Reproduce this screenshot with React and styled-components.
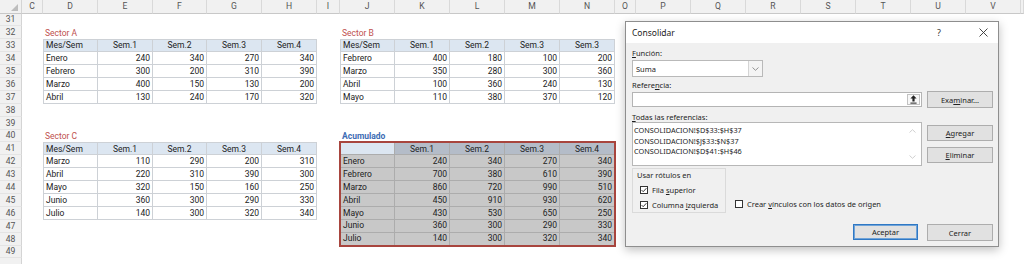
import React from "react";
import styled, { createGlobalStyle } from "styled-components";

// columnas visibles de la hoja (C..V)
const COLS = ["C", "D", "E", "F", "G", "H", "I", "J", "K", "L", "M", "N", "O", "P", "Q", "R", "S", "T", "U", "V", ""];
const ROWS = Array.from({ length: 20 }, (_, i) => 31 + i);

const sectorA = [
    ["Mes/Sem", "Sem.1", "Sem.2", "Sem.3", "Sem.4"],
    ["Enero", 240, 340, 270, 340],
    ["Febrero", 300, 200, 310, 390],
    ["Marzo", 400, 150, 130, 200],
    ["Abril", 130, 240, 170, 320],
];

const sectorB = [
    ["Mes/Sem", "Sem.1", "Sem.2", "Sem.3", "Sem.3"],
    ["Febrero", 400, 180, 100, 200],
    ["Marzo", 350, 280, 300, 360],
    ["Abril", 100, 360, 240, 130],
    ["Mayo", 110, 380, 370, 120],
];

const sectorC = [
    ["Mes/Sem", "Sem.1", "Sem.2", "Sem.3", "Sem.4"],
    ["Marzo", 110, 290, 200, 310],
    ["Abril", 220, 310, 390, 300],
    ["Mayo", 320, 150, 160, 250],
    ["Junio", 360, 300, 290, 330],
    ["Julio", 140, 300, 320, 340],
];

const acumulado = [
    ["", "Sem.1", "Sem.2", "Sem.3", "Sem.4"],
    ["Enero", 240, 340, 270, 340],
    ["Febrero", 700, 380, 610, 390],
    ["Marzo", 860, 720, 990, 510],
    ["Abril", 450, 910, 930, 620],
    ["Mayo", 430, 530, 650, 250],
    ["Junio", 360, 300, 290, 330],
    ["Julio", 140, 300, 320, 340],
];

const referencias = [
    "CONSOLIDACION!$D$33:$H$37",
    "CONSOLIDACION!$J$33:$N$37",
    "CONSOLIDACION!$D$41:$H$46",
];

const GlobalStyle = createGlobalStyle`
    html, body {
        margin: 0;
        padding: 0;
        background: #fff;
    }
    body {
        font-family: Roboto, "Liberation Sans", sans-serif;
    }
`;

const Check = () => (
    <svg width="6" height="6" viewBox="0 0 6 6">
        <polyline points="0.6,3.1 2.2,4.7 5.4,1.2" fill="none" stroke="#222" strokeWidth="0.9" />
    </svg>
);

const Table = ({ col, row, widths, data, acc }) => (
    <TableGrid $col={col} $row={row} $rows={data.length} $widths={widths} $acc={acc}>
        {data.map((r, ri) =>
            r.map((v, ci) => (
                <Cell
                    key={ri + "-" + ci}
                    $head={ri === 0}
                    $align={ri === 0 ? (ci === 0 ? "left" : "center") : ci === 0 ? "left" : "right"}
                    $first={ci === 0}
                    $top={ri === 0}
                    $acc={acc}
                    $corner={acc && ri === 0 && ci === 0}
                >
                    {v}
                </Cell>
            ))
        )}
    </TableGrid>
);

const CheckRow = ({ checked, children }) => (
    <CheckLine>
        <Box>{checked && <Check />}</Box>
        <span>{children}</span>
    </CheckLine>
);

const App = () => {
    return (
        <Screen>
            <GlobalStyle />
            <Sheet>
                <Corner>
                    <svg width="7" height="7" viewBox="0 0 7 7">
                        <polygon points="7,0 7,7 0,7" fill="#bdbdbd" />
                    </svg>
                </Corner>
                {COLS.map((c, i) => (
                    <ColHead key={"c" + i} $col={i + 2}>
                        {c}
                    </ColHead>
                ))}
                {ROWS.map((n) => (
                    <RowHead key={"r" + n} $row={n - 29}>
                        {n < 50 ? n : ""}
                    </RowHead>
                ))}

                <SheetTitle $col={3} $row={3}>Sector A</SheetTitle>
                <Table col={3} row={4} widths="55px 55px 54px 55px 55px" data={sectorA} />

                <SheetTitle $col={9} $row={3}>Sector B</SheetTitle>
                <Table col={9} row={4} widths="repeat(5, 55px)" data={sectorB} />

                <SheetTitle $col={3} $row={11}>Sector C</SheetTitle>
                <Table col={3} row={12} widths="55px 55px 54px 55px 55px" data={sectorC} />

                <SheetTitle $col={9} $row={11} $blue>Acumulado</SheetTitle>
                <Table col={9} row={12} widths="repeat(5, 55px)" data={acumulado} acc />
            </Sheet>

            <Dialog>
                <TitleBar>
                    <span>Consolidar</span>
                    <TitleButton $gap={14}>?</TitleButton>
                    <TitleButton>
                        <svg width="9" height="9" viewBox="0 0 9 9">
                            <path d="M0.5 0.5 L8.5 8.5 M8.5 0.5 L0.5 8.5" stroke="#333" strokeWidth="0.9" />
                        </svg>
                    </TitleButton>
                </TitleBar>
                <Body>
                    <Label $mt={5}>
                        <u>F</u>unción:
                    </Label>
                    <Select>
                        <span>Suma</span>
                        <SelectArrow>
                            <svg width="7" height="4" viewBox="0 0 7 4">
                                <polyline points="0.5,0.5 3.5,3.3 6.5,0.5" fill="none" stroke="#7a7a7a" strokeWidth="0.8" />
                            </svg>
                        </SelectArrow>
                    </Select>
                    <Label $mt={3}>
                        Refere<u>n</u>cia:
                    </Label>
                    <Split $mt={1}>
                        <RefInput>
                            <RefButton>
                                <svg width="7" height="9" viewBox="0 0 7 9">
                                    <path d="M3.5 0.3 L6.6 3.6 H4.6 V6.6 H2.4 V3.6 H0.4 Z" fill="#222" />
                                    <rect x="0.4" y="7.6" width="6.2" height="1" fill="#222" />
                                </svg>
                            </RefButton>
                        </RefInput>
                        <Button>
                            Exa<u>m</u>inar...
                        </Button>
                    </Split>
                    <Label $mt={4}>
                        <u>T</u>odas las referencias:
                    </Label>
                    <Split $mt={0}>
                        <List>
                            {referencias.map((r) => (
                                <ListItem key={r}>{r}</ListItem>
                            ))}
                            <ScrollArrows>
                                <svg width="7" height="4" viewBox="0 0 7 4">
                                    <polyline points="0.5,3.5 3.5,0.7 6.5,3.5" fill="none" stroke="#c4c4c4" strokeWidth="0.8" />
                                </svg>
                                <svg width="7" height="4" viewBox="0 0 7 4">
                                    <polyline points="0.5,0.5 3.5,3.3 6.5,0.5" fill="none" stroke="#c4c4c4" strokeWidth="0.8" />
                                </svg>
                            </ScrollArrows>
                        </List>
                        <ButtonStack>
                            <Button>
                                <u>A</u>gregar
                            </Button>
                            <Button>
                                <u>E</u>liminar
                            </Button>
                        </ButtonStack>
                    </Split>
                    <Options>
                        <Group>
                            <Legend>Usar rótulos en</Legend>
                            <CheckRow checked>
                                Fila <u>s</u>uperior
                            </CheckRow>
                            <CheckRow checked>
                                Columna <u>i</u>zquierda
                            </CheckRow>
                        </Group>
                        <LinkOption>
                            <CheckRow>
                                Crear <u>v</u>ínculos con los datos de origen
                            </CheckRow>
                        </LinkOption>
                    </Options>
                    <Footer>
                        <Button $primary>Aceptar</Button>
                        <Button>Cerrar</Button>
                    </Footer>
                </Body>
            </Dialog>
        </Screen>
    );
};

const Screen = styled.div`
    position: relative;
    width: 1024px;
    height: 264px;
    overflow: hidden;
    background: #fff;
`;

const Sheet = styled.div`
    display: grid;
    grid-template-columns: 22px 21px 55px 55px 54px 55px 55px 23px repeat(5, 55px) 21px repeat(7, 55px) 1fr;
    grid-template-rows: 13.5px repeat(20, 12.9px);
    font-family: Roboto, "Liberation Sans", sans-serif;
    font-size: 8.5px;
    color: #222;
`;

const Corner = styled.div`
    grid-column: 1;
    grid-row: 1;
    background: #f1f1f1;
    border-right: 1px solid #d4d4d4;
    border-bottom: 1px solid #c8c8c8;
    box-sizing: border-box;
    display: flex;
    align-items: flex-end;
    justify-content: flex-end;
    padding: 0 3px 2px 0;
`;

const ColHead = styled.div`
    grid-column: ${(p) => p.$col};
    grid-row: 1;
    box-sizing: border-box;
    background: #f1f1f1;
    border-right: 1px solid #d9d9d9;
    border-bottom: 1px solid #c8c8c8;
    display: flex;
    align-items: center;
    justify-content: center;
    color: #555;
    font-size: 8.6px;
`;

const RowHead = styled.div`
    grid-column: 1;
    grid-row: ${(p) => p.$row};
    box-sizing: border-box;
    background: #f1f1f1;
    border-right: 1px solid #d4d4d4;
    border-bottom: 1px solid #e4e4e4;
    display: flex;
    align-items: center;
    justify-content: center;
    color: #555;
    font-size: 8.6px;
`;

const SheetTitle = styled.div`
    grid-column: ${(p) => p.$col} / span 3;
    grid-row: ${(p) => p.$row};
    display: flex;
    align-items: center;
    padding-left: 2px;
    color: ${(p) => (p.$blue ? "#3d6cb4" : "#c0504d")};
    font-weight: ${(p) => (p.$blue ? 700 : 400)};
`;

const TableGrid = styled.div`
    grid-column: ${(p) => p.$col} / span 5;
    grid-row: ${(p) => p.$row} / span ${(p) => p.$rows};
    display: grid;
    grid-template-columns: ${(p) => p.$widths};
    grid-auto-rows: 12.9px;
    outline: ${(p) => (p.$acc ? "2px solid #a8453e" : "none")};
    outline-offset: -1px;
`;

const cellBg = (p) => {
    if (p.$corner) return "#dce6f1";
    if (p.$acc) return p.$head ? "#b4bcc8" : "#c8c8c8";
    return p.$head ? "#dce6f1" : "#fff";
};

const Cell = styled.div`
    box-sizing: border-box;
    background: ${cellBg};
    border-right: 1px solid ${(p) => (p.$acc ? "#acacac" : "#cdd1d6")};
    border-bottom: 1px solid ${(p) => (p.$acc ? "#acacac" : "#cdd1d6")};
    border-left: ${(p) => (p.$first ? "1px solid #cdd1d6" : "none")};
    border-top: ${(p) => (p.$top ? "1px solid #cdd1d6" : "none")};
    display: flex;
    align-items: center;
    justify-content: ${(p) => (p.$align === "right" ? "flex-end" : p.$align === "center" ? "center" : "flex-start")};
    padding: 0 2px;
    white-space: nowrap;
    line-height: 1;
`;

const Dialog = styled.div`
    position: absolute;
    left: 625px;
    top: 21px;
    width: 374px;
    height: 226px;
    box-sizing: border-box;
    background: #f0f0f0;
    border: 1px solid #8e8e8e;
    box-shadow: 0 3px 9px rgba(0, 0, 0, 0.25);
    font-family: "Noto Sans", "Open Sans", sans-serif;
    font-size: 7.5px;
    color: #1e1e1e;
    display: flex;
    flex-direction: column;
`;

const TitleBar = styled.div`
    height: 21px;
    flex: none;
    background: #fff;
    display: flex;
    align-items: center;
    padding-left: 6px;
    font-size: 8.5px;
    color: #222;

    & > span {
        flex: 1;
    }
`;

const TitleButton = styled.div`
    width: 30px;
    height: 21px;
    margin-right: ${(p) => p.$gap || 0}px;
    display: flex;
    align-items: center;
    justify-content: center;
    font-size: 9px;
    color: #333;
`;

const Body = styled.div`
    display: flex;
    flex-direction: column;
    padding: 0 5px 0 6px;
`;

const Label = styled.div`
    height: 10px;
    line-height: 10px;
    margin-top: ${(p) => p.$mt}px;
`;

const Select = styled.div`
    margin-top: 2px;
    width: 131px;
    height: 17px;
    box-sizing: border-box;
    background: #fff;
    border: 1px solid #b9b9b9;
    display: flex;
    align-items: center;
    padding-left: 3px;

    & > span {
        flex: 1;
    }
`;

const SelectArrow = styled.div`
    width: 14px;
    height: 100%;
    box-sizing: border-box;
    border-left: 1px solid #d4d4d4;
    background: #f4f4f4;
    display: flex;
    align-items: center;
    justify-content: center;
`;

const Split = styled.div`
    margin-top: ${(p) => p.$mt}px;
    display: grid;
    grid-template-columns: 290px 66px;
    column-gap: 5px;
    align-items: start;
`;

const RefInput = styled.div`
    margin-top: 1px;
    height: 15px;
    box-sizing: border-box;
    background: #fff;
    border: 1px solid #b4b4b4;
    display: flex;
    justify-content: flex-end;
    align-items: center;
    padding-right: 1px;
`;

const RefButton = styled.div`
    width: 13px;
    height: 11px;
    box-sizing: border-box;
    border: 1px solid #c2c2c2;
    background: #f7f7f7;
    display: flex;
    align-items: center;
    justify-content: center;
`;

const Button = styled.div`
    width: ${(p) => (p.$primary ? 65 : 66)}px;
    height: ${(p) => (p.$primary ? 16 : 17)}px;
    box-sizing: border-box;
    background: #e1e1e1;
    border: 1px solid ${(p) => (p.$primary ? "#2f78c4" : "#adadad")};
    box-shadow: ${(p) => (p.$primary ? "inset 0 0 0 1px #6fa3d8" : "none")};
    display: flex;
    align-items: center;
    justify-content: center;
    color: #222;
`;

const List = styled.div`
    position: relative;
    height: 44px;
    box-sizing: border-box;
    background: #fff;
    border: 1px solid #b7b7b7;
    padding: 2px 0 0 1px;
`;

const ListItem = styled.div`
    height: 10.5px;
    line-height: 10.5px;
    font-size: 7.3px;
    color: #222;
`;

const ScrollArrows = styled.div`
    position: absolute;
    top: 0;
    right: 0;
    bottom: 0;
    width: 17px;
    display: flex;
    flex-direction: column;
    align-items: center;
    justify-content: space-between;
    padding: 6px 0 6px;
    box-sizing: border-box;
`;

const ButtonStack = styled.div`
    padding-top: 3px;
    display: flex;
    flex-direction: column;
    gap: 6px;

    & > div {
        height: 16px;
    }
`;

const Options = styled.div`
    margin-top: 2px;
    display: flex;
    align-items: flex-end;
`;

const Group = styled.div`
    width: 94px;
    height: 45px;
    box-sizing: border-box;
    border: 1px solid #dadada;
    padding: 1px 0 0 7px;
    display: flex;
    flex-direction: column;
    gap: 5px;
`;

const Legend = styled.div`
    height: 10px;
    line-height: 10px;
    margin-left: -3px;
    margin-bottom: 0;
`;

const CheckLine = styled.div`
    height: 10px;
    display: flex;
    align-items: center;
    gap: 4px;
    white-space: nowrap;
`;

const Box = styled.div`
    width: 8px;
    height: 8px;
    box-sizing: border-box;
    border: 1px solid #333;
    background: #fff;
    display: flex;
    align-items: center;
    justify-content: center;
`;

const LinkOption = styled.div`
    margin: 0 0 4px 9px;
`;

const Footer = styled.div`
    margin-top: 11px;
    display: flex;
    justify-content: flex-end;
    gap: 9px;
`;

export default App;
